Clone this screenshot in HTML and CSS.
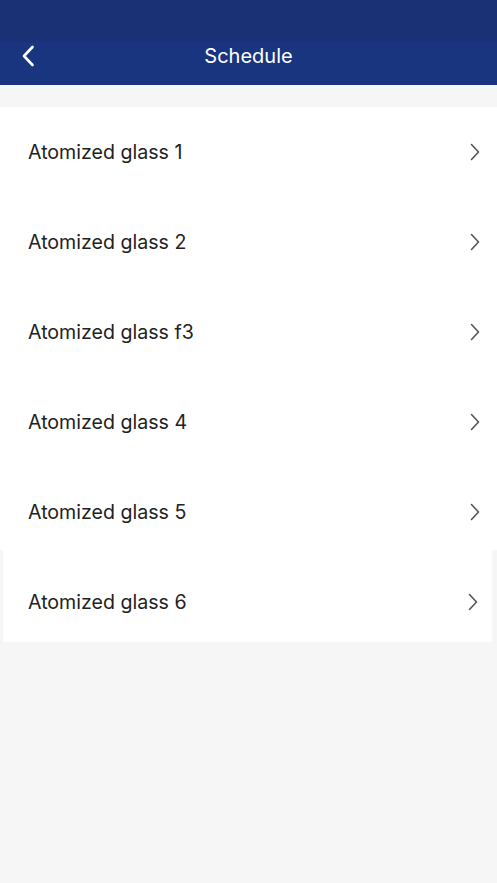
FILE: index.html
```html
<!DOCTYPE html>
<html lang="en">
<head>
  <meta charset="UTF-8" />
  <meta name="viewport" content="width=device-width, initial-scale=1" />
  <title>Schedule</title>
  <link rel="stylesheet" href="styles.css">
</head>
<body>
  <header class="top-bar">
    <div class="status-bar"></div>
    <div class="nav-bar">
      <a class="back" href="#">
        <svg width="14" height="22" viewBox="0 0 14 22">
          <path d="M11.5 2 L3 11 L11.5 20" fill="none" stroke="#fff" stroke-width="2.6" stroke-linecap="round" stroke-linejoin="round" />
        </svg>
      </a>
      <h1>Schedule</h1>
    </div>
  </header>

  <main class="content">
    <ul class="list">
      <li class="row"><span>Atomized glass 1</span><svg class="chev" width="10" height="18" viewBox="0 0 10 18"><path d="M1.5 1.5 L8.5 9 L1.5 16.5" /></svg></li>
      <li class="row"><span>Atomized glass 2</span><svg class="chev" width="10" height="18" viewBox="0 0 10 18"><path d="M1.5 1.5 L8.5 9 L1.5 16.5" /></svg></li>
      <li class="row"><span>Atomized glass f3</span><svg class="chev" width="10" height="18" viewBox="0 0 10 18"><path d="M1.5 1.5 L8.5 9 L1.5 16.5" /></svg></li>
      <li class="row"><span>Atomized glass 4</span><svg class="chev" width="10" height="18" viewBox="0 0 10 18"><path d="M1.5 1.5 L8.5 9 L1.5 16.5" /></svg></li>
      <li class="row"><span>Atomized glass 5</span><svg class="chev" width="10" height="18" viewBox="0 0 10 18"><path d="M1.5 1.5 L8.5 9 L1.5 16.5" /></svg></li>
    </ul>
    <div class="card">
      <div class="row"><span>Atomized glass 6</span><svg class="chev" width="10" height="18" viewBox="0 0 10 18"><path d="M1.5 1.5 L8.5 9 L1.5 16.5" /></svg></div>
    </div>
  </main>
</body>
</html>
```

FILE: styles.css
```css
body {
  margin: 0;
  padding: 0;
  font-family: "Inter", "Liberation Sans", sans-serif;
  background: #f6f6f6;
  color: #222;
  height: 883px;
  overflow: hidden;
}

.top-bar {
  background: #1a3580;
}

.status-bar {
  height: 42px;
  background: #1b3176;
}

.nav-bar {
  height: 43px;
  display: flex;
  align-items: center;
  justify-content: center;
  position: relative;
}

.nav-bar h1 {
  margin: 0;
  font-size: 20px;
  font-weight: 400;
  color: #fff;
  transform: translateY(-8px);
}

.back {
  position: absolute;
  left: 21px;
  top: 3px;
  display: flex;
}

.content {
  padding-top: 22px;
}

.list {
  list-style: none;
  margin: 0;
  padding: 0;
  background: #fff;
}

.row {
  height: 90px;
  box-sizing: border-box;
  padding: 31px 17px 0 28px;
  display: flex;
  align-items: flex-start;
  justify-content: space-between;
  font-size: 19.6px;
  line-height: 28px;
}

.list .row:last-child {
  height: 83px;
}

.chev {
  margin-top: 5px;
}

.chev path {
  fill: none;
  stroke: #555;
  stroke-width: 1.6;
  stroke-linecap: round;
  stroke-linejoin: round;
}

.card {
  margin: 0 5px 0 3px;
  background: #fff;
}

.card .row {
  height: 92px;
  padding: 38px 14px 0 25px;
}
```
